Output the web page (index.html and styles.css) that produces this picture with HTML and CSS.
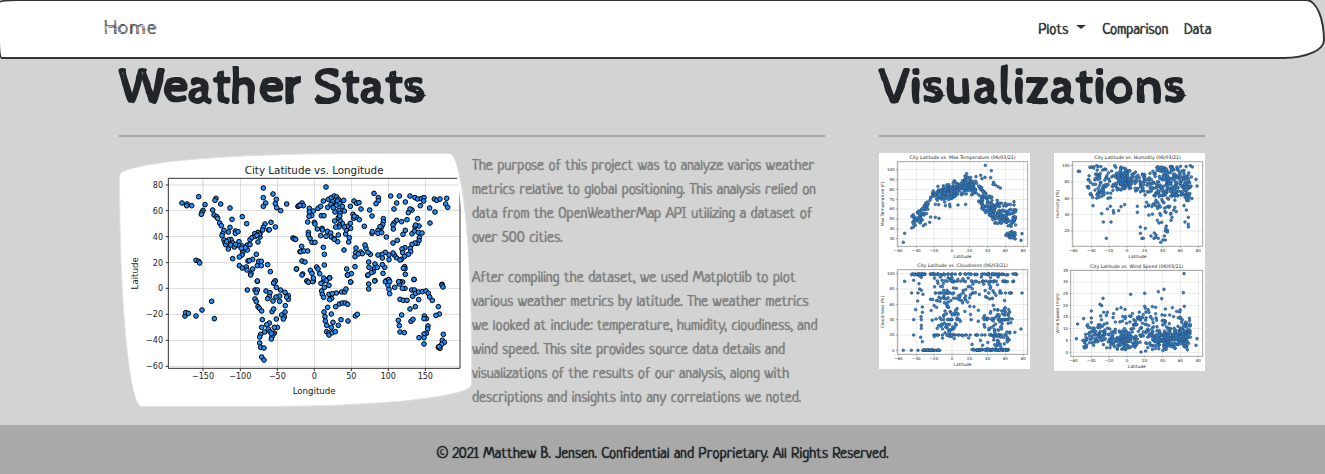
FILE: index.html
```html
<!DOCTYPE html>
<html lang="en">
<head>
<meta charset="utf-8">
<meta name="viewport" content="width=device-width, initial-scale=1">
<title>Weather Stats</title>
<link rel="stylesheet" href="styles.css">
</head>
<body>
<nav class="navbar">
  <div class="navbar-inner">
    <a class="brand" href="#">Home</a>
    <div class="nav-links">
      <button class="nav-link dropdown" type="button">Plots<span class="caret"></span></button>
      <a class="nav-link" href="#">Comparison</a>
      <a class="nav-link" href="#">Data</a>
    </div>
  </div>
</nav>
<main class="container">
  <section class="panel">
    <h1>Weather Stats</h1>
    <hr>
    <div class="summary">
      <svg class="thumbnail" id="world" viewBox="42 39 1029 732" role="img" aria-label="City Latitude vs. Longitude"></svg>
      <div class="copy">
        <p>The purpose of this project was to analyze varios weather<br>metrics relative to global positioning. This analysis relied on<br>data from the OpenWeatherMap API utilizing a dataset of<br>over 500 cities.</p>
        <p>After compiling the dataset, we used Matplotlib to plot<br>various weather metrics by latitude. The weather metrics<br>we looked at include: temperature, humidity, cloudiness, and<br>wind speed. This site provides source data details and<br>visualizations of the results of our analysis, along with<br>descriptions and insights into any correlations we noted.</p>
      </div>
    </div>
  </section>
  <section class="panel">
    <h1>Visualizations</h1>
    <hr>
    <div class="gallery">
      <div class="gallery-column">
        <a href="#"><svg class="plot" id="temperature" viewBox="27 24 453 324" role="img" aria-label="Max temperature"></svg></a>
        <a href="#"><svg class="plot" id="cloudiness" viewBox="27 9 453 324" role="img" aria-label="Cloudiness"></svg></a>
      </div>
      <div class="gallery-column">
        <a href="#"><svg class="plot" id="humidity" viewBox="27 24 453 324" role="img" aria-label="Humidity"></svg></a>
        <a href="#"><svg class="plot" id="wind" viewBox="27 9 453 330" role="img" aria-label="Wind speed"></svg></a>
      </div>
    </div>
  </section>
</main>
<footer class="footer">© 2021 Matthew B. Jensen. Confidential and Proprietary. All Rights Reserved.</footer>
<script src="plots.js"></script>
</body>
</html>
```
FILE: styles.css
```css
* { box-sizing: border-box; }

body {
  margin: 0;
  background: #d3d3d3;
  color: #212529;
  font: 16px/24px "Neucha", "Liberation Sans Narrow", "DejaVu Sans Condensed", sans-serif;
  text-shadow: 0 0 1px currentColor;
}

.navbar {
  margin: -1px 0 0 -2px;
  padding: 14px 0;
  background: #fff;
  border: 2px solid #333;
  border-radius: 25px 25px 55px 5px / 5px 55px 25px 25px;
}

.navbar-inner {
  display: flex;
  align-items: center;
  justify-content: space-between;
  max-width: 1140px;
  margin: 0 auto;
  padding: 0 12px;
}

.brand {
  color: #444;
  font: 20px/28px "Cabin Sketch", Lato, sans-serif;
  text-decoration: none;
  text-shadow: none;
}

.nav-links { display: flex; padding-top: 4px; }

.nav-link {
  padding: 0 8px;
  border: 0;
  background: none;
  color: #333;
  font: inherit;
  text-decoration: none;
  text-shadow: inherit;
}

.dropdown {
  display: flex;
  align-items: center;
  gap: 8px;
}

.caret {
  border: 5px solid transparent;
  border-top: 4px solid #333;
  border-bottom: 0;
  margin-bottom: 8px;
}

.container {
  display: grid;
  grid-template-columns: 2fr 1fr;
  max-width: 1141px;
  margin: 0 auto;
  padding-right: 1px;
}

.panel { padding: 0 27px; min-width: 0; }

h1 {
  margin: 0;
  font: 400 50px/58px "Cabin Sketch", Lato, sans-serif;
  font-variant-ligatures: none;
  text-shadow: none;
  -webkit-text-stroke: 2px currentColor;
}

hr {
  height: 2px;
  margin: 18px 0 16px;
  border: 0;
  background: #a6a6a6;
}

.summary {
  display: grid;
  grid-template-columns: 1fr 1fr;
  align-items: start;
}

.thumbnail {
  display: block;
  width: 100%;
  padding: 4px;
  overflow: hidden;
  background: #fff;
  border: 1px solid #dee2e6;
  border-radius: 255px 25px 225px 25px / 25px 225px 25px 255px;
}

.copy { padding-top: 2px; color: #808080; white-space: nowrap; }

.copy p { margin: 0 0 16px; }

.copy p:last-child { margin-bottom: 14px; }

.gallery {
  display: grid;
  grid-template-columns: 1fr 1fr;
  gap: 24px;
}

.plot { display: block; width: 100%; background: #fff; }

.footer {
  padding: 18px 16px 7px;
  background: #a9a9a9;
  text-align: center;
}

svg text { font-family: "DejaVu Sans", sans-serif; fill: #222; text-shadow: none; }
.grid { stroke: #b0b0b0; stroke-width: 2; opacity: .75; }
.axis { fill: none; stroke: #333; stroke-width: 3; }
.dots { fill: #1e90ff; stroke: #000; stroke-width: 3; }
.plot .grid { stroke-width: 2; opacity: .4; }
.plot .axis { stroke: #777; stroke-width: 2; }
.plot .dots { fill: #1f7ad0; stroke: #123c66; stroke-width: 2; opacity: .9; }
.plot text { fill: #222; }
```
FILE: plots.js
```js
const NS = "http://www.w3.org/2000/svg";

function add(parent, name, attrs, text) {
  const el = document.createElementNS(NS, name);
  for (const key in attrs) el.setAttribute(key, attrs[key]);
  if (text) el.textContent = text;
  parent.appendChild(el);
  return el;
}

function parse(list, dx = 0, dy = 0) {
  return list.trim().split(/\s+/).map(p => {
    const [x, y] = p.split(",").map(Number);
    return [x + dx, y + dy];
  });
}

function draw(id, o) {
  const svg = document.getElementById(id);
  const [l, t, r, b] = o.frame;
  for (const [x] of o.xticks) add(svg, "path", { class: "grid", d: `M${x} ${t}V${b}` });
  for (const [y] of o.yticks) add(svg, "path", { class: "grid", d: `M${l} ${y}H${r}` });
  const dots = add(svg, "g", { class: "dots" });
  for (const [x, y] of o.points) add(dots, "circle", { cx: x, cy: y, r: o.radius });
  add(svg, "path", { class: "axis", d: `M${l} ${t}H${r}V${b}H${l}Z` });
  for (const [x, label] of o.xticks) {
    add(svg, "path", { class: "axis", d: `M${x} ${b}v${o.tick}` });
    add(svg, "text", { x, y: b + o.tick + o.size + 1, "font-size": o.size, "text-anchor": "middle" }, label);
  }
  for (const [y, label] of o.yticks) {
    add(svg, "path", { class: "axis", d: `M${l} ${y}h${-o.tick}` });
    add(svg, "text", { x: l - o.tick * 2, y: y + o.size * .36, "font-size": o.size, "text-anchor": "end" }, label);
  }
  const mid = (l + r) / 2, my = (t + b) / 2;
  add(svg, "text", { x: mid, y: t - o.titleGap, "font-size": o.titleSize, "text-anchor": "middle" }, o.title);
  add(svg, "text", { x: mid, y: o.xlabelY, "font-size": o.labelSize, "text-anchor": "middle" }, o.xlabel);
  add(svg, "text", { transform: `translate(${o.ylabelX} ${my}) rotate(-90)`, "font-size": o.labelSize, "text-anchor": "middle" }, o.ylabel);
}

const northWest = `216,174 231,177 230,182 245,182 266,155 285,179 279,196 276,202 274,208 258,346 266,349 269,354
318,160 315,166 332,177 308,195 312,210 320,215 323,220 329,234 334,242 360,189 366,223 397,215 410,236 342,256
338,266 336,272 355,261 360,247 376,258 376,265 384,260 342,285 345,293 347,299 355,312 363,284 368,294 373,306
387,290 387,302 397,303 402,315 412,300 412,315 420,284 420,299 398,323 396,330 388,336 368,341 388,362 397,369
409,366 411,375 423,385 428,372 414,348 428,343 439,328 446,349 454,349 442,362 454,362 473,359 481,380 442,409
460,129 460,158 467,174 460,184 489,147 499,163 496,176 500,188 512,197 530,177 564,184 568,181 465,237 460,247
458,255 450,266 450,276 444,291 444,262 434,266 426,278 436,274 476,255 483,232 496,246 478,254 549,279 556,283
570,320 560,372 496,408 491,414 355,285 350,290 362,300 406,308 394,310 377,298 448,268 441,271 418,347`;
const northEast = `108,126 25,183 36,174 40,182 30,181 58,190 58,201 65,212 53,231 57,214 70,198 84,190 92,184 100,168 115,163
124,158 133,153 140,156 145,163 142,168 128,170 123,178 130,186 139,181 150,176 161,166 157,184 147,196 150,205
163,198 135,201 130,188 113,187 94,212 102,212 73,232 75,237 55,262 55,270 60,280 66,292 75,292 82,252 96,250
92,272 108,274 97,255 112,259 122,264 124,276 132,281 143,290 145,270 133,283 167,267 169,255 178,278 176,291
182,250 181,235 172,244 163,246 157,235 148,240 147,246 137,246 134,228 150,226 145,218 149,213 189,208 191,220
200,217 208,224 193,214 181,184 192,168 200,175 207,173 213,192 239,195 246,213 252,145 265,158 265,167 258,176
223,244 246,265 247,260 264,256 264,265 275,263 280,221 280,230 278,239 274,247 270,245 289,276 302,153 328,153
320,174 346,171 312,192 360,153 375,158 383,162 394,161 402,158 401,168 391,182 366,195 360,192 355,203 383,221
351,224 335,230 320,226 312,234 309,240 310,252 346,256 339,268 322,286 309,294 366,266 373,258 375,245 387,243
377,240 385,262 396,264 388,278 387,287 382,295 375,294 366,298 361,310 362,320 355,328 345,308 336,312 338,323
344,334 334,343 330,345 319,338 313,330 309,324 297,344 297,330 286,322 276,328 277,339 264,330 241,328 234,322
228,310 225,300 198,309 197,323 212,321 217,326 195,335 205,327 162,315 100,307 103,328 103,360 35,304 32,320
42,318 53,318 36,348 45,351 19,372 38,387 61,376 66,385 80,366 84,372 89,386 51,408 70,408 101,408 109,405
119,398 12,281 17,283 195,365 170,372 172,390 184,386 182,411 236,351 255,357 237,367 254,369 262,367 250,380
244,383 233,391 279,385 284,367 277,359 344,365 345,371 340,370 346,388 255,407 289,407 296,404 328,411 338,411
372,404 456,418 433,162 440,166 450,162 470,160 467,177 473,187 419,189 435,201 420,234`;
const southWest = `225,123 227,113 235,115 258,123 276,105 305,79 313,131 412,45 442,18 435,45 442,45 439,53 435,72 439,80
444,95 448,100 455,108 457,134 455,157 452,178 449,186 449,204 452,217 462,219 455,246 462,255 468,48 480,53
478,64 473,71 489,78 495,18 491,24 499,37 512,45 525,52 535,62 535,73 530,66 509,63 498,66 509,79 526,92 525,111
515,120 523,126 520,132 499,132 486,110 491,102 502,157 493,157 478,144 470,149 475,162 464,171 480,170 493,174
489,178 486,185 484,192 484,175 422,0`;
const southEast = `36,0 51,18 55,22 68,20 70,9 93,25 101,9 109,17 119,9 95,48 103,37 117,31 97,58 101,67 117,58 125,70
119,74 139,54 127,56 155,51 164,51 168,42 182,21 173,0 113,97 102,111 124,117 137,95 148,87 157,84 166,84 173,88
105,125 106,138 110,151 124,157 129,142 145,151 153,134 174,138 110,170 117,174 117,180 127,173 136,170 196,123
202,118 234,0 236,27 236,42 254,18 286,20 296,14 299,20 294,31 297,43 299,56 314,37 330,20 328,27 345,40 337,40
326,20 372,13 330,73 340,76 351,76 365,45 373,45 368,64 377,55 386,51 386,74 397,50 408,48 415,55 419,66 427,76
376,95 360,102 335,120 325,136 328,152 330,171 343,173 363,139 369,133 403,123 409,131 402,131 414,153 413,162
409,175 402,177 387,188 402,188 402,207 445,95 448,117 438,121 456,30 459,36 460,178 457,196 463,202 455,208
445,217 450,220 447,215`;

const minus = n => String(n).replace("-", "−");

draw("world", {
  frame: [175, 100, 1050, 670], radius: 7, tick: 8, size: 24, labelSize: 26, titleSize: 31, titleGap: 13,
  title: "City Latitude vs. Longitude", xlabel: "Longitude", ylabel: "Laitude", xlabelY: 746, ylabelX: 84,
  xticks: [279, 391, 502, 613, 724, 835, 946].map((x, i) => [x, minus(i * 50 - 150)]),
  yticks: [120, 197, 275, 353, 430, 508, 586, 664].map((y, i) => [y, minus(80 - i * 20)]),
  points: [...parse(northWest), ...parse(northEast, 540), ...parse(southWest, 0, 390), ...parse(southEast, 540, 390)]
});

let seed = 20210603;
function rnd() {
  seed = (seed + 0x6D2B79F5) | 0;
  let t = Math.imul(seed ^ (seed >>> 15), 1 | seed);
  t = (t + Math.imul(t ^ (t >>> 7), 61 | t)) ^ t;
  return ((t ^ (t >>> 14)) >>> 0) / 4294967296;
}
const bell = () => rnd() + rnd() - 1;
const many = (n, fn) => Array.from({ length: n }, fn);
const latitude = () => {
  const k = rnd();
  if (k < .16) return 160 + bell() * 46;
  if (k < .44) return 240 + bell() * 56;
  if (k < .6) return 300 + bell() * 42;
  return 330 + rnd() * 108;
};

function curve(knots, x) {
  for (let i = 1; i < knots.length; i++) {
    if (x <= knots[i][0]) {
      const [x0, y0] = knots[i - 1], [x1, y1] = knots[i];
      return y0 + (y1 - y0) * (x - x0) / (x1 - x0);
    }
  }
  return knots[knots.length - 1][1];
}

const small = {
  radius: 4, tick: 4, size: 12, labelSize: 13, titleSize: 14, titleGap: 7, xlabel: "Latitude", ylabelX: 42,
  xticks: [85, 139, 192, 246, 299, 353, 406, 460].map((x, i) => [x, minus(i * 20 - 60)])
};

const warm = [[118, 222], [150, 212], [175, 175], [190, 150], [240, 140], [290, 120], [320, 134], [350, 178], [380, 205], [440, 215]];
draw("temperature", {
  ...small, frame: [82, 50, 473, 304], title: "City Latitude vs. Max Temperature (06/03/21)",
  ylabel: "Max Temperature (F)", xlabelY: 338,
  yticks: [74, 104, 133, 163, 192, 222, 252, 281].map((y, i) => [y, String(100 - i * 10)]),
  points: [
    ...many(460, () => { const x = latitude(); return [x, curve(warm, x) + bell() * (x > 330 ? 42 : 30)]; }),
    ...many(26, () => [422 + bell() * 22, 270 + bell() * 15]),
    ...parse(`346,61 364,77 362,98 290,86 286,94 318,95 345,97 371,112 376,120 384,125 391,129 369,118 100,292 104,265
      125,249 130,236 456,266 453,286 432,170 432,180 160,242 166,238 179,232 207,220 196,217 182,216 264,180
      287,178 240,185 239,178 226,182 196,178 206,179 332,91 336,101 293,96 302,97`)
  ]
});

draw("humidity", {
  ...small, frame: [82, 50, 473, 304], title: "City Latitude vs. Humidity (06/03/21)",
  ylabel: "Humidity (%)", xlabelY: 338,
  yticks: [62, 111, 160, 209, 258].map((y, i) => [y, String(100 - i * 20)]),
  points: [
    ...many(80, () => [164 + bell() * 46, 64 + rnd() * 96]),
    ...many(120, () => [236 + bell() * 44, 104 + bell() * 42]),
    ...many(45, () => [298 + bell() * 32, 112 + bell() * 38]),
    ...many(180, () => [375 + bell() * 64, 64 + rnd() * 90]),
    ...many(65, () => [423 + bell() * 20, 128 + bell() * 48]),
    ...many(45, () => [345 + bell() * 75, 175 + bell() * 45]),
    ...parse(`100,79 104,79 155,62 209,62 436,62 442,66 453,103 456,123 144,182 175,231 198,231 184,280 170,206
      187,192 205,197 196,184 221,197 228,185 239,179 206,204 277,184 277,202 286,246 301,250 286,265 291,280 295,280
      318,273 328,264 327,280 333,277 340,280 347,292 354,285 358,273 361,285 361,258 367,256 364,243 362,250 350,232
      342,234 337,226 347,211 378,226 381,217 394,200 420,231 430,217 430,238 430,246 424,195 417,182 333,270 367,261`)
  ]
});

draw("cloudiness", {
  ...small, frame: [82, 35, 473, 289], title: "City Latitude vs. Cloudiness (06/03/21)",
  ylabel: "Cloudiness (%)", xlabelY: 323,
  yticks: [47, 93, 140, 185, 231, 277].map((y, i) => [y, String(100 - i * 20)]),
  points: [
    ...many(80, () => [120 + rnd() * 320, 47 + rnd() * 4]),
    ...many(35, () => [230 + rnd() * 210, 70 + bell() * 2]),
    ...many(40, () => [158 + rnd() * 54, 277]),
    ...many(60, () => [306 + rnd() * 110, 277 - rnd() * 3]),
    ...many(20, () => [190 + rnd() * 240, 105]),
    ...many(22, () => [180 + rnd() * 240, 185]),
    ...many(30, () => [190 + rnd() * 220, 231]),
    ...many(20, () => [235 + bell() * 42, 215 + bell() * 24]),
    ...many(30, () => [235 + bell() * 60, 150 + bell() * 50]),
    ...many(65, () => [390 + bell() * 56, 150 + rnd() * 122]),
    ...many(75, () => [290 + bell() * 150, 55 + rnd() * 80]),
    ...many(50, () => [180 + rnd() * 240, 140 + rnd() * 122]),
    ...parse(`100,277 124,277 144,277 104,70 131,67 147,77 149,54 154,58 149,93 154,97 125,105 144,105 143,129
      137,155 131,185 131,231 152,238 157,251 157,147 157,163 153,176 154,185 154,211 154,202 456,105 453,213`)
  ]
});

draw("wind", {
  ...small, frame: [77, 37, 473, 295], title: "City Latitude vs. Wind Speed (06/03/21)",
  ylabel: "Wind Speed (mph)", xlabelY: 329,
  yticks: [37, 72, 107, 142, 177, 212, 247, 283].map((y, i) => [y, String(35 - i * 5)]),
  points: [
    ...many(70, () => [158 + bell() * 46, 235 + bell() * 42]),
    ...many(120, () => [232 + bell() * 56, 246 + bell() * 34]),
    ...many(165, () => [365 + bell() * 76, 242 + bell() * 38]),
    ...many(75, () => [420 + bell() * 24, 226 + bell() * 52]),
    ...many(70, () => [305 + bell() * 75, 218 + bell() * 56]),
    ...many(40, () => [290 + bell() * 160, 180 + bell() * 36]),
    ...parse(`417,47 357,94 340,101 299,106 257,109 415,104 350,122 174,121 165,139 170,143 139,159 139,180 116,182
      98,198 94,242 116,248 119,255 125,261 119,270 125,245 117,266 456,242 453,262 288,282 216,153 228,149 240,154
      187,163 299,145 301,151 322,146 332,148 382,149 418,145 395,160 361,153 184,172 139,193 130,208`)
  ]
});
```
